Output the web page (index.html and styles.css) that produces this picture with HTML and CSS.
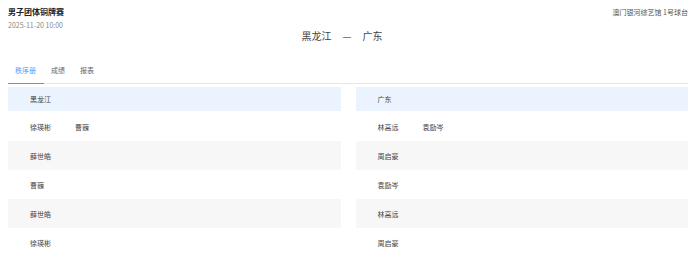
FILE: index.html
```html
<!DOCTYPE html>
<html lang="zh-CN">
<head>
    <meta charset="UTF-8">
    <meta name="viewport" content="width=device-width, initial-scale=1.0">
    <title>男子团体铜牌赛</title>
    <link rel="stylesheet" href="styles.css">
</head>
<body>
    <div class="page">
        <div class="match-head">
            <div class="match-info">
                <div class="match-title">男子团体铜牌赛</div>
                <div class="match-time">2025-11-20 10:00</div>
            </div>
            <div class="match-venue">澳门银河综艺馆 1号球台</div>
        </div>
        <div class="teams">
            <span>黑龙江</span>
            <span class="dash">—</span>
            <span>广东</span>
        </div>

        <div class="tabs">
            <div class="tab active">秩序册</div>
            <div class="tab">成绩</div>
            <div class="tab">报表</div>
        </div>

        <div class="order">
            <div class="order-col">
                <div class="row team-row"><span>黑龙江</span></div>
                <div class="row"><span>徐瑛彬</span><span>曹巍</span></div>
                <div class="row grey"><span>薛世皓</span></div>
                <div class="row"><span>曹巍</span></div>
                <div class="row grey"><span>薛世皓</span></div>
                <div class="row"><span>徐瑛彬</span></div>
            </div>
            <div class="order-col">
                <div class="row team-row"><span>广东</span></div>
                <div class="row"><span>林高远</span><span>袁励岑</span></div>
                <div class="row grey"><span>周启豪</span></div>
                <div class="row"><span>袁励岑</span></div>
                <div class="row grey"><span>林高远</span></div>
                <div class="row"><span>周启豪</span></div>
            </div>
        </div>
    </div>
</body>
</html>
```

FILE: styles.css
```css
body {
    margin: 0;
    font-family: "Noto Sans CJK SC", "Noto Sans", sans-serif;
    color: #333;
    background: #fff;
}

.page {
    padding: 6px 7px 0 8px;
}

.match-head {
    display: flex;
    justify-content: space-between;
    align-items: flex-start;
}

.match-title {
    font-size: 8px;
    font-weight: bold;
    line-height: 12px;
    color: #222;
}

.match-time {
    font-size: 7px;
    line-height: 11px;
    margin-top: 2px;
    color: #888;
}

.match-venue {
    font-size: 7px;
    line-height: 12px;
    color: #555;
}

.teams {
    display: flex;
    justify-content: center;
    gap: 11px;
    font-size: 10px;
    line-height: 14px;
    color: #444;
    margin-top: -2px;
    padding-right: 12px;
}

.teams .dash {
    color: #666;
}

.tabs {
    display: flex;
    margin-top: 22px;
    border-bottom: 1px solid #e6e6e6;
}

.tab {
    font-size: 7px;
    line-height: 11px;
    padding: 0 8px 7px 7px;
    color: #666;
}

.tab.active {
    color: #409eff;
    border-bottom: 1px solid #409eff;
    margin-bottom: -1px;
}

.order {
    display: flex;
    gap: 15px;
    margin-top: 3px;
}

.order-col {
    flex: 1;
}

.row {
    display: flex;
    gap: 24px;
    align-items: center;
    height: 29px;
    padding-left: 22px;
    font-size: 7px;
    color: #444;
}

.team-row {
    height: 24px;
    background: #ebf4fe;
    margin-bottom: 1px;
}

.row.grey {
    background: #f7f7f7;
}
```
